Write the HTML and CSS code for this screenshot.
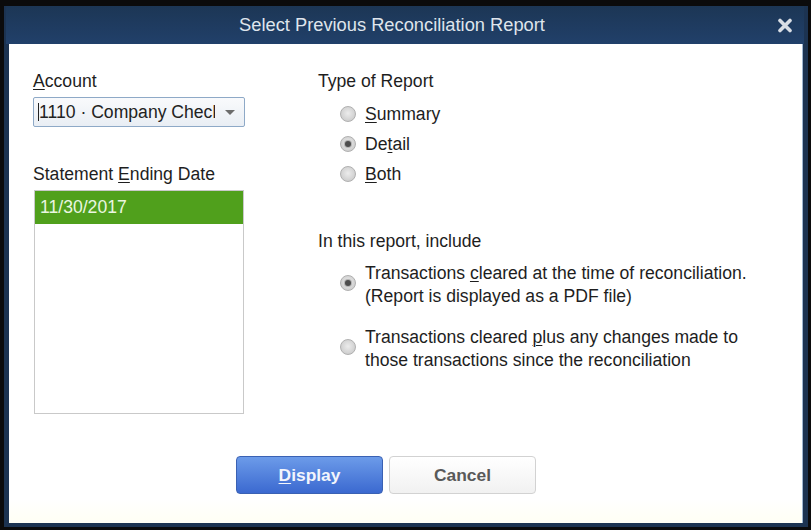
FILE: index.html
```html
<!DOCTYPE html>
<html>
<head>
<meta charset="utf-8">
<link rel="stylesheet" href="styles.css">
</head>
<body>
<div class="dialog">
  <div class="titlebar">
    <span class="title">Select Previous Reconciliation Report</span>
    <svg class="close" width="14" height="15" viewBox="0 0 14 15"><path d="M2 2.5 L12 12.5 M12 2.5 L2 12.5" stroke="#d9dee5" stroke-width="3.6" stroke-linecap="round"/></svg>
  </div>
  <div class="content">
    <div class="main">
      <div class="col-left">
        <div class="label"><u>A</u>ccount</div>
        <div class="combo">
          <span class="caret"></span>
          <span class="combo-text">1110 · Company Checking</span>
          <span class="arrow"></span>
        </div>
        <div class="label label-date">Statement <u>E</u>nding Date</div>
        <div class="list">
          <div class="list-item selected">11/30/2017</div>
        </div>
      </div>
      <div class="col-right">
        <div class="label">Type of Report</div>
        <div class="radio-group">
          <div class="radio-row"><span class="radio"></span><span><u>S</u>ummary</span></div>
          <div class="radio-row"><span class="radio checked"></span><span>De<u>t</u>ail</span></div>
          <div class="radio-row"><span class="radio"></span><span><u>B</u>oth</span></div>
        </div>
        <div class="label label-include">In this report, include</div>
        <div class="option option-first"><span class="radio checked"></span><span class="option-text">Transactions <u>c</u>leared at the time of reconciliation.<br>(Report is displayed as a PDF file)</span></div>
        <div class="option option-second"><span class="radio"></span><span class="option-text">Transactions cleared <u>p</u>lus any changes made to<br>those transactions since the reconciliation</span></div>
      </div>
    </div>
    <div class="buttons">
      <div class="btn btn-primary"><u>D</u>isplay</div>
      <div class="btn btn-secondary">Cancel</div>
    </div>
  </div>
</div>
</body>
</html>
```
FILE: styles.css
```css
html, body {
  margin: 0;
  padding: 0;
}
body {
  background: #0b0b0c;
  width: 811px;
  height: 530px;
  padding: 6px 0 0 4px;
  box-sizing: border-box;
  font-family: "Liberation Sans", Arial, sans-serif;
  overflow: hidden;
}
.dialog {
  width: 804px;
  height: 521px;
  background: #1c3351;
  display: flex;
  flex-direction: column;
}
.titlebar {
  height: 38px;
  margin: 0 4px 0 2px;
  background: linear-gradient(#1c3655, #21406a);
  display: flex;
  align-items: center;
  padding-right: 12px;
}
.title {
  flex: 1;
  text-align: center;
  color: #dfe5ec;
  font-size: 18.3px;
}
.close {
  display: block;
}
.content {
  flex: 1;
  margin: 0 5px 4px 5px;
  background: linear-gradient(#ffffff 0%, #ffffff 95%, #fffff4 100%);
  border-right: 1px solid #9fb6d0;
  padding: 27px 0 0 24px;
  color: #1e1e1e;
  font-size: 17.6px;
}
.main {
  display: grid;
  grid-template-columns: 212px 1fr;
  column-gap: 73px;
}
.label {
  line-height: 20px;
  height: 20px;
}
u {
  text-decoration-thickness: 1px;
  text-underline-offset: 2px;
}
.combo {
  margin-top: 6px;
  height: 30px;
  box-sizing: border-box;
  border: 1px solid #8ea9c7;
  border-radius: 2px;
  background: linear-gradient(#f9fafc, #e9eef4);
  display: flex;
  align-items: center;
  padding-left: 4px;
}
.caret {
  width: 1px;
  height: 18px;
  background: #222;
}
.combo-text {
  width: 176px;
  overflow: hidden;
  white-space: nowrap;
  color: #222;
}
.arrow {
  margin-left: 10px;
  width: 0;
  height: 0;
  border-left: 5px solid transparent;
  border-right: 5px solid transparent;
  border-top: 5px solid #6c6c6c;
}
.label-date {
  margin-top: 37px;
}
.list {
  margin-top: 6px;
  margin-left: 1px;
  width: 210px;
  height: 224px;
  box-sizing: border-box;
  border: 1px solid #c9c9c9;
}
.list-item {
  height: 33px;
  line-height: 33px;
  padding-left: 5px;
}
.list-item.selected {
  background: #50a01c;
  color: #eaf6e0;
}
.radio-group {
  margin-top: 8px;
}
.radio-row {
  height: 30px;
  display: flex;
  align-items: center;
  padding-left: 22px;
}
.radio {
  flex: none;
  width: 16px;
  height: 16px;
  box-sizing: border-box;
  border-radius: 50%;
  border: 1px solid #b0b0b0;
  background: radial-gradient(circle at 50% 45%, #ececec 0%, #d6d6d6 55%, #c4c4c4 100%);
  margin-right: 9px;
  position: relative;
}
.radio.checked::after {
  content: "";
  position: absolute;
  left: 4px;
  top: 4px;
  width: 6px;
  height: 6px;
  border-radius: 50%;
  background: #4d4d4d;
  box-shadow: 0 0 0 1px #b4b4b4;
}
.label-include {
  margin-top: 42px;
}
.option {
  display: flex;
  align-items: flex-start;
  padding-left: 22px;
  line-height: 22.5px;
}
.option .radio {
  margin-top: 13px;
}
.option-first {
  margin-top: 11px;
}
.option-second {
  margin-top: 19px;
}
.buttons {
  margin-top: 42px;
  padding-left: 203px;
  display: flex;
  gap: 6px;
}
.btn {
  width: 147px;
  height: 38px;
  box-sizing: border-box;
  border-radius: 4px;
  display: flex;
  align-items: center;
  justify-content: center;
  font-weight: bold;
  font-size: 17.4px;
}
.btn-primary {
  background: linear-gradient(#6c9be9, #3b69d0);
  border: 1px solid #3a61b3;
  color: #f2f5fc;
}
.btn-secondary {
  background: linear-gradient(#ffffff, #f1f1f1);
  border: 1px solid #d2d2d2;
  color: #595959;
}
```
